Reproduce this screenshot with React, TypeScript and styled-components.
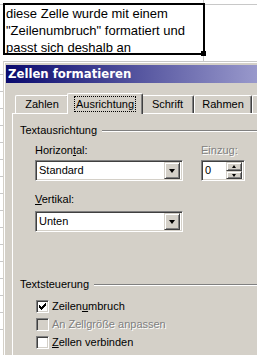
import React from 'react'
import styled, { createGlobalStyle } from 'styled-components'

const ui = `'Liberation Sans', Arial, sans-serif`

const GlobalStyle = createGlobalStyle`
  html, body {
    margin: 0;
    padding: 0;
    background: #fff;
    overflow: hidden;
  }
`

const Page = styled.div`
  width: 257px;
  height: 355px;
  overflow: hidden;
  background: repeating-linear-gradient(to bottom, #fff 0 16px, #c8c8c8 16px 17px);
  background-position: 0 -10px;
`

const Sheet = styled.div`
  box-sizing: border-box;
  height: 61px;
  padding: 3px 0 0 3px;
  background:
    linear-gradient(#c8c8c8, #c8c8c8) 0 4px / 100% 1px no-repeat,
    linear-gradient(#c8c8c8, #c8c8c8) 203px 0 / 1px 100% no-repeat,
    #fff;
`

const Cell = styled.div`
  position: relative;
  box-sizing: border-box;
  width: 202px;
  height: 52px;
  border: 2px solid #000;
  padding-left: 1px;
  background: #fff;
  color: #000;
  font: 13px/17px ${ui};
`

const FillHandle = styled.span`
  position: absolute;
  right: -3px;
  bottom: -3px;
  width: 5px;
  height: 5px;
  background: #000;
`

const Dialog = styled.div`
  box-sizing: border-box;
  width: 330px;
  height: 294px;
  margin-left: 3px;
  padding: 3px 0 0 2px;
  background: #d4d0c8;
  border-top: 1px solid #c8c8c8;
  border-left: 1px solid #d4d0c8;
  box-shadow: inset 1px 1px #fff;
  overflow: hidden;
`

const TitleBar = styled.div`
  display: flex;
  align-items: center;
  height: 18px;
  padding-left: 2px;
  background: linear-gradient(to right, #0a0a6e, #c4c4e8);
  color: #fff;
  font: bold 11.7px 'DejaVu Sans', Verdana, sans-serif;
  white-space: nowrap;
`

const Body = styled.div`
  padding: 10px 0 0 6px;
  font: 11px/13px ${ui};
  color: #000;
`

const TabStrip = styled.div`
  display: flex;
  align-items: flex-end;
  height: 20px;
  padding-left: 3px;
`

const Tab = styled.div<{ $w: number; $active?: boolean }>`
  position: relative;
  z-index: ${(p) => (p.$active ? 1 : 0)};
  box-sizing: border-box;
  flex: none;
  display: flex;
  align-items: center;
  justify-content: center;
  width: ${(p) => (p.$active ? p.$w + 4 : p.$w)}px;
  height: ${(p) => (p.$active ? 21 : 18)}px;
  margin: 0 ${(p) => (p.$active ? -2 : 0)}px ${(p) => (p.$active ? -1 : 0)}px;
  background: #d4d0c8;
  border-top: 1px solid #fff;
  border-left: 1px solid #fff;
  border-right: 1px solid #404040;
  border-radius: 2px 2px 0 0;
  box-shadow: inset -1px 0 #808080;
  white-space: nowrap;
`

const FocusLabel = styled.span`
  padding: 1px 1px 0;
  border: 1px dotted #000;
  line-height: 13px;
`

const Panel = styled.div`
  height: 260px;
  padding: 10px 0 0 7px;
  border-top: 1px solid #fff;
  border-left: 1px solid #fff;
`

const GroupHeader = styled.div<{ $top?: number }>`
  display: flex;
  align-items: center;
  gap: 5px;
  height: 13px;
  margin-top: ${(p) => p.$top ?? 0}px;
  white-space: nowrap;
  &::after {
    content: '';
    flex: 1;
    border-top: 1px solid #808080;
    border-bottom: 1px solid #fff;
  }
`

const FieldRow = styled.div<{ $top: number }>`
  display: flex;
  gap: 18px;
  margin: ${(p) => p.$top}px 0 0 15px;
`

const Field = styled.div`
  display: flex;
  flex-direction: column;
`

const Label = styled.div<{ $gap: number; $disabled?: boolean }>`
  height: 13px;
  margin-bottom: ${(p) => p.$gap}px;
  color: ${(p) => (p.$disabled ? '#808080' : '#000')};
  text-shadow: ${(p) => (p.$disabled ? '1px 1px #fff' : 'none')};
`

const Sunken = styled.div<{ $w: number }>`
  box-sizing: border-box;
  display: flex;
  align-items: center;
  width: ${(p) => p.$w}px;
  height: 21px;
  padding: 2px 2px 2px 3px;
  background: #fff;
  border: 1px solid;
  border-color: #808080 #fff #fff #808080;
  box-shadow: inset 1px 1px #404040, inset -1px -1px #d4d0c8;
`

const Value = styled.span`
  flex: 1;
  white-space: nowrap;
`

const Raised = styled.div`
  box-sizing: border-box;
  display: flex;
  align-items: center;
  justify-content: center;
  background: #d4d0c8;
  border: 1px solid;
  border-color: #d4d0c8 #404040 #404040 #d4d0c8;
  box-shadow: inset 1px 1px #fff, inset -1px -1px #808080;
`

const DropButton = styled(Raised)`
  width: 16px;
  height: 17px;
  &::after {
    content: '';
    border-left: 3.5px solid transparent;
    border-right: 3.5px solid transparent;
    border-top: 4px solid #000;
    margin-top: 1px;
  }
`

const SpinButtons = styled.div`
  display: flex;
  flex-direction: column;
`

const SpinButton = styled(Raised)<{ $up?: boolean }>`
  width: 16px;
  height: ${(p) => (p.$up ? 9 : 8)}px;
  &::after {
    content: '';
    border-left: 2.5px solid transparent;
    border-right: 2.5px solid transparent;
    ${(p) => (p.$up ? 'border-bottom: 3px solid #000;' : 'border-top: 3px solid #000;')}
  }
`

const CheckList = styled.div`
  margin: 6px 0 0 16px;
`

const CheckRow = styled.div<{ $disabled?: boolean }>`
  display: flex;
  align-items: center;
  gap: 3px;
  height: 18px;
  white-space: nowrap;
  color: ${(p) => (p.$disabled ? '#808080' : '#000')};
  text-shadow: ${(p) => (p.$disabled ? '1px 1px #fff' : 'none')};
`

const Box = styled.span<{ $disabled?: boolean }>`
  box-sizing: border-box;
  flex: none;
  display: flex;
  align-items: center;
  justify-content: center;
  width: 13px;
  height: 13px;
  background: ${(p) => (p.$disabled ? '#d4d0c8' : '#fff')};
  border: 1px solid;
  border-color: #808080 #fff #fff #808080;
  box-shadow: inset 1px 1px #404040, inset -1px -1px #d4d0c8;
`

const CheckMark = () => (
  <svg width="7" height="7" viewBox="0 0 7 7" shapeRendering="crispEdges">
    <path d="M0 2h1v3H0zM1 3h1v3H1zM2 4h1v3H2zM3 3h1v3H3zM4 2h1v3H4zM5 1h1v3H5zM6 0h1v3H6z" fill="#000" />
  </svg>
)

// the last tab is only visible as its left edge
const tabs = [
  { label: 'Zahlen', w: 54 },
  { label: 'Ausrichtung', w: 72, active: true },
  { label: 'Schrift', w: 53 },
  { label: 'Rahmen', w: 58 },
  { label: '', w: 52 },
]

export default function App() {
  return (
    <Page>
      <GlobalStyle />
      <Sheet>
        <Cell>
          diese Zelle wurde mit einem "Zeilenumbruch" formatiert und passt sich deshalb an
          <FillHandle />
        </Cell>
      </Sheet>
      <Dialog>
        <TitleBar>Zellen formatieren</TitleBar>
        <Body>
          <TabStrip>
            {tabs.map((t, i) => (
              <Tab key={i} $w={t.w} $active={t.active}>
                {t.active ? <FocusLabel>{t.label}</FocusLabel> : t.label}
              </Tab>
            ))}
          </TabStrip>
          <Panel>
            <GroupHeader>Textausrichtung</GroupHeader>
            <FieldRow $top={7}>
              <Field>
                <Label $gap={3}>
                  Horizon<u>t</u>al:
                </Label>
                <Sunken $w={148}>
                  <Value>Standard</Value>
                  <DropButton />
                </Sunken>
              </Field>
              <Field>
                <Label $gap={3} $disabled>
                  Einzug:
                </Label>
                <Sunken $w={44}>
                  <Value>0</Value>
                  <SpinButtons>
                    <SpinButton $up />
                    <SpinButton />
                  </SpinButtons>
                </Sunken>
              </Field>
            </FieldRow>
            <FieldRow $top={12}>
              <Field>
                <Label $gap={5}>
                  <u>V</u>ertikal:
                </Label>
                <Sunken $w={148}>
                  <Value>Unten</Value>
                  <DropButton />
                </Sunken>
              </Field>
            </FieldRow>
            <GroupHeader $top={46}>Textsteuerung</GroupHeader>
            <CheckList>
              <CheckRow>
                <Box>
                  <CheckMark />
                </Box>
                <span>
                  Zeilen<u>u</u>mbruch
                </span>
              </CheckRow>
              <CheckRow $disabled>
                <Box $disabled />
                <span>An Zellgröße anpassen</span>
              </CheckRow>
              <CheckRow>
                <Box />
                <span>
                  <u>Z</u>ellen verbinden
                </span>
              </CheckRow>
            </CheckList>
          </Panel>
        </Body>
      </Dialog>
    </Page>
  )
}
